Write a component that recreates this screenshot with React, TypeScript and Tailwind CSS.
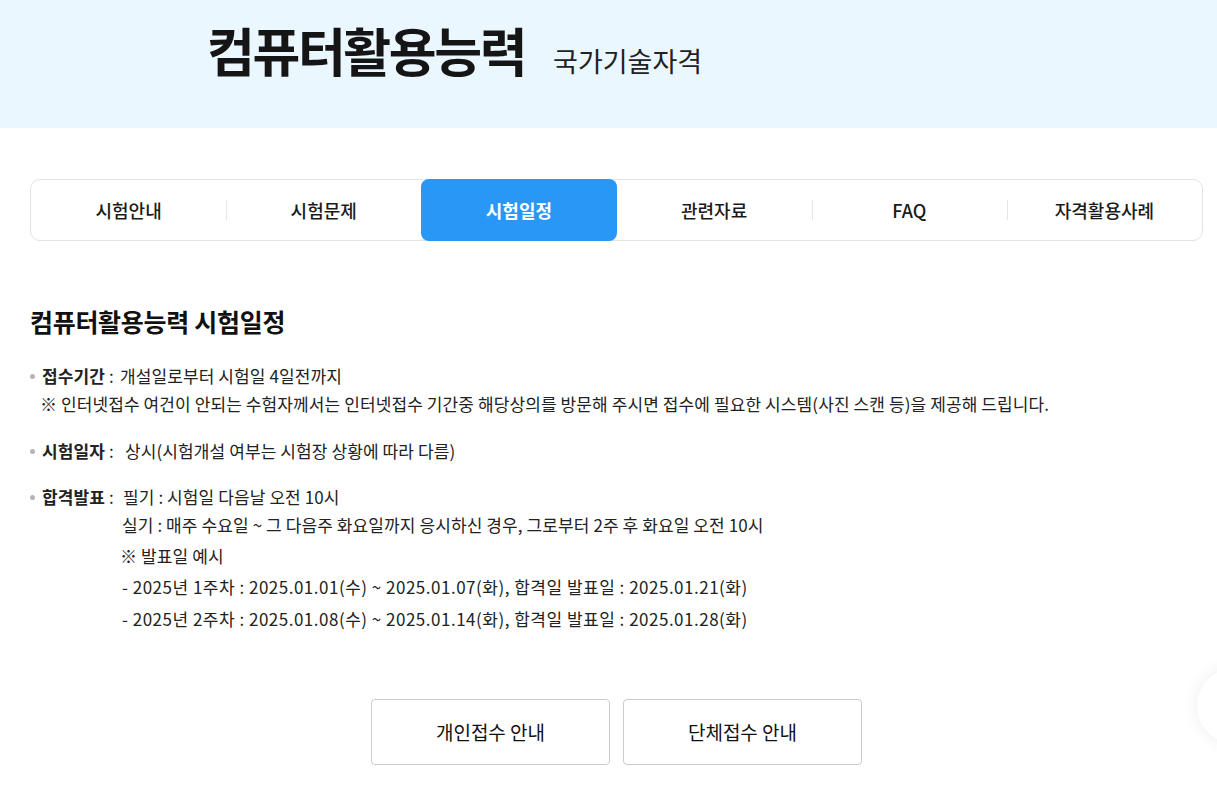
import { Fragment } from "react";

const tabs = ["시험안내", "시험문제", "시험일정", "관련자료", "FAQ", "자격활용사례"];
const activeIndex = 2;

const Bullet = () => (
  <span className="absolute left-0 top-[12px] h-[5px] w-[5px] rounded-full bg-[#b5b5b5]" />
);

const App = () => {
  return (
    <div className="relative min-h-screen bg-white font-['Noto_Sans_CJK_KR','Noto_Sans',sans-serif] text-[#222]">
      <header className="h-[128px] bg-[#ebf7ff] pl-[207px] pt-[24px]">
        <div className="flex items-baseline">
          <h1 className="text-[52px] font-bold leading-none tracking-[-2.4px] text-[#151515]">컴퓨터활용능력</h1>
          <span className="ml-[28px] text-[27px] leading-none text-[#222]">국가기술자격</span>
        </div>
      </header>

      <main className="pl-[30px] pr-[14px]">
        <nav className="mt-[51px] grid h-[62px] grid-cols-6 rounded-[10px] border border-[#e3e3e3]">
          {tabs.map((tab, i) => {
            const active = i === activeIndex;
            const showDivider = i > 0 && i !== activeIndex && i - 1 !== activeIndex;
            return (
              <Fragment key={tab}>
                <div
                  className={
                    active
                      ? "-my-px flex items-center justify-center rounded-[8px] bg-[#2997f6] text-[18px] font-bold text-white"
                      : "relative flex items-center justify-center text-[18px] font-medium text-[#1a1a1a]"
                  }
                >
                  {showDivider && (
                    <span className="absolute left-0 top-[20px] h-[20px] w-px bg-[#e6e6e6]" />
                  )}
                  {tab}
                </div>
              </Fragment>
            );
          })}
        </nav>

        <h2 className="mt-[65px] text-[25px] font-bold leading-[30px] tracking-[-0.3px] text-[#111]">
          컴퓨터활용능력 시험일정
        </h2>

        <div className="mt-[26px] text-[17px] leading-[28px] tracking-[0.1px]">
          <div className="relative pl-[12px]">
            <Bullet />
            <p>
              <span className="inline-block w-[78px]">
                <b className="font-bold">접수기간</b> :
              </span>
              개설일로부터 시험일 4일전까지
            </p>
            <p className="-ml-[2px]">
              ※ 인터넷접수 여건이 안되는 수험자께서는 인터넷접수 기간중 해당상의를 방문해 주시면 접수에 필요한 시스템(사진 스캔 등)을 제공해 드립니다.
            </p>
          </div>

          <div className="relative mt-[19px] pl-[12px]">
            <Bullet />
            <p>
              <span className="inline-block w-[83px]">
                <b className="font-bold">시험일자</b> :
              </span>
              상시(시험개설 여부는 시험장 상황에 따라 다름)
            </p>
          </div>

          <div className="relative mt-[18px] flex pl-[12px]">
            <Bullet />
            <span className="w-[80px] shrink-0">
              <b className="font-bold">합격발표</b> :
            </span>
            <div>
              <p className="ml-[1px]">필기 : 시험일 다음날 오전 10시</p>
              <p>실기 : 매주 수요일 ~ 그 다음주 화요일까지 응시하신 경우, 그로부터 2주 후 화요일 오전 10시</p>
              <p className="-ml-[2px] mt-[3px]">※ 발표일 예시</p>
              <p className="mt-[3px] tracking-[0.5px]">- 2025년 1주차 : 2025.01.01(수) ~ 2025.01.07(화), 합격일 발표일 : 2025.01.21(화)</p>
              <p className="mt-[4px] tracking-[0.5px]">- 2025년 2주차 : 2025.01.08(수) ~ 2025.01.14(화), 합격일 발표일 : 2025.01.28(화)</p>
            </div>
          </div>
        </div>

        <div className="mt-[66px] flex justify-center gap-[13px] pb-[40px]">
          <button className="flex h-[66px] w-[239px] items-center justify-center rounded-[4px] border border-[#cccccc] bg-white text-[19px] text-[#111]">
            개인접수 안내
          </button>
          <button className="flex h-[66px] w-[239px] items-center justify-center rounded-[4px] border border-[#cccccc] bg-white text-[19px] text-[#111]">
            단체접수 안내
          </button>
        </div>
      </main>

      <div className="fixed right-[-56px] top-[668px] h-[76px] w-[76px] rounded-full bg-white shadow-[0_0_18px_rgba(0,0,0,0.07)]" />
    </div>
  );
};

export default App;
